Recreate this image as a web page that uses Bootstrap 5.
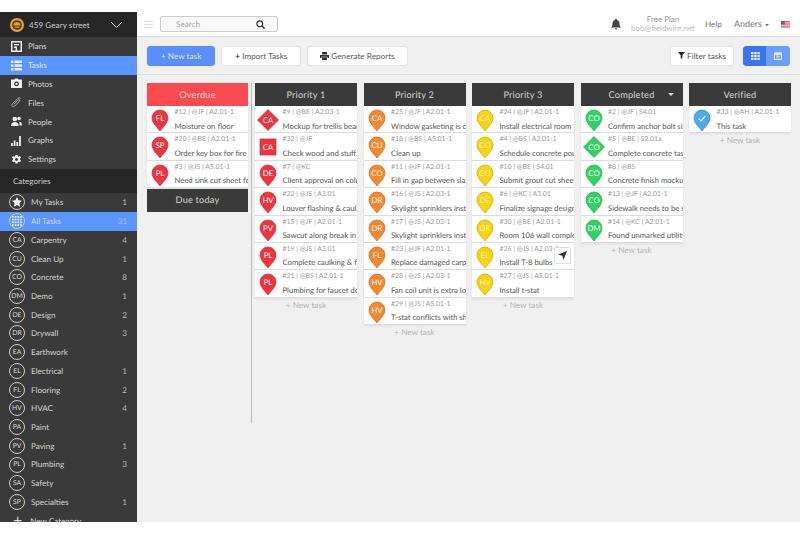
<!DOCTYPE html>
<html>
<head>
    <meta charset="UTF-8">
    <meta name="viewport" content="width=device-width, initial-scale=1">
    <title>Tasks</title>
    <link href="https://cdn.jsdelivr.net/npm/bootstrap@5.3.3/dist/css/bootstrap.min.css" rel="stylesheet">
    <style>
        html, body { height: 533px; overflow: hidden; background: #fff; }
        body { font-family: Lato, "Liberation Sans", sans-serif; font-size: 9px; color: #444; padding: 12px 0 11px; text-rendering: geometricPrecision; }
        .app-frame { height: 510px; overflow: hidden; }
        .side-panel { width: 137px; flex: none; background: #3a3a3a; color: #ddd; overflow: hidden; }
        .side-head { height: 25px; background: #262626; padding: 0 10px; }
        .site-name { font-size: 8px; color: #ccc; margin-left: 5px; letter-spacing: .1px; }
        .side-nav-row { height: 18.8px; padding-left: 11px; color: #d4d4d4; font-size: 8px; }
        .side-nav-row svg { width: 11px; height: 11px; margin-right: 6px; flex: none; fill: #eee; }
        .side-active { background: #5b96ff; color: #d9e6ff; }
        .cats-head { height: 24.5px; background: #262626; padding-left: 13px; font-size: 8px; color: #ccc; }
        .cat-row { height: 18.72px; padding: 0 10px 0 9px; font-size: 8.1px; color: #d4d4d4; }
        .cat-ring { width: 16px; height: 16px; border: 1px solid #ccc; border-radius: 50%; font-size: 6.8px; color: #ddd; margin-right: 6px; flex: none; }
        .cat-count { margin-left: auto; color: #bbb; }
        .main-pane { background: #f0f0f0; min-width: 0; }
        .top-strip { height: 25px; background: #fff; border-bottom: 1px solid #ddd; padding: 0 10px 0 7px; }
        .ham-icon { width: 9px; height: 7px; border-top: 1px solid #ddd; border-bottom: 1px solid #ddd; position: relative; margin-right: 7px; }
        .ham-icon::after { content: ""; position: absolute; left: 0; right: 0; top: 2px; border-top: 1px solid #ddd; }
        .search-box { width: 118px; height: 16px; border: 1px solid #ccc; border-radius: 2px; background: #f8f8f8; padding: 0 12px 0 15px; color: #aaa; font-size: 8.2px; }
        .bell-icon { margin-right: 10px; }
        .plan-info { line-height: 9.5px; font-size: 8px; text-align: center; color: #999; margin-right: 10px; }
        .plan-info span { color: #bbb; }
        .top-link { font-size: 8.2px; color: #777; }
        .help-link { margin-right: 12px; }
        .user-link { font-size: 9px; }
        .user-caret { border: 2.500px solid transparent; border-top-color: #666; border-bottom: 0; margin: 1px 12px 0 3px; }
        .tool-strip { height: 38px; padding: 0 10px; border-bottom: 1px solid #ddd; gap: 6px; }
        .tool-strip .btn { height: 20px; padding: 0 13px; font-size: 8.2px; line-height: 18px; border-radius: 3px; white-space: nowrap; }
        .btn-pale { background: #fff; border: 1px solid #e4e4e4; color: #555; }
        .btn-blue { background: #5b8fff; border: 1px solid #5b8fff; color: #d8e5ff; }
        .tool-strip .btn-report { padding: 0 12px; gap: 2px; }
        .tool-strip .btn-filter { padding: 0 7px; gap: 2px; }
        .view-pick { margin-left: 3px; }
        .tool-strip .view-pick .btn { width: 24px; padding: 0; display: flex; align-items: center; justify-content: center; }
        .view-on { background: #3b74f2; border: 1px solid #3b74f2; }
        .view-off { background: #6c9dfb; border: 1px solid #6c9dfb; }
        .board-area { padding: 8px 0 0 10px; }
        .task-col { width: 102px; flex: none; margin-right: 6.5px; }
        .first-col { width: 101px; margin-right: 3px; }
        .col-rule { width: 1px; height: 340px; background: #bbb; margin-right: 3px; flex: none; }
        .col-title { height: 23px; background: #3a3a3a; color: #d4d4d4; font-size: 9.2px; letter-spacing: .2px; position: relative; }
        .col-title.overdue { background: #fa4b50; color: #ffd5d5; }
        .col-caret { position: absolute; right: 9px; top: 10px; border: 3px solid transparent; border-top-color: #ddd; border-bottom: 0; }
        .task-item { height: 27.4px; background: #fff; border-bottom: 1px solid #ddd; padding-left: 27.5px; position: relative; overflow: hidden; white-space: nowrap; box-shadow: 0 1px 2px rgba(0,0,0,.08); }
        .task-pin { position: absolute; left: 4px; top: 3px; width: 18px; height: 23px; }
        .task-meta { font-size: 6.9px; color: #999; line-height: 9px; padding-top: 2px; }
        .task-name { font-size: 7.7px; color: #555; line-height: 10px; margin-top: 3.500px; }
        .add-task { text-align: center; font-size: 8.2px; color: #b5b5b5; padding-top: 1px; }
        .due-title { margin-top: .5px; }
        .send-tip { position: absolute; right: 3px; top: 4px; width: 17px; height: 17px; background: #fff; border: 1px solid #ddd; border-radius: 2px; }
    </style>
</head>
<body>
    <div class="app-frame d-flex">
        <div class="side-panel">
            <div class="side-head d-flex align-items-center">
                <svg width="14" height="14" viewBox="0 0 14 14"><circle cx="7" cy="7" r="7" fill="#e8a33a"/><circle cx="7" cy="7" r="4.800" fill="#4a3a20"/><path d="M3.500 7.500a3.500 3.500 0 0 1 7 0z" fill="#e8a33a"/><rect x="4.500" y="8.500" width="5" height="1.200" fill="#e8a33a"/></svg>
                <span class="site-name">459 Geary street</span>
                <svg class="ms-auto me-1" width="13" height="8" viewBox="0 0 13 8"><path d="M1 1l5.500 5.500L12 1" fill="none" stroke="#ddd" stroke-width="1"/></svg>
            </div>
            <div id="sideNav"></div>
            <div class="cats-head d-flex align-items-center">Categories</div>
            <div id="catList"></div>
        </div>
        <div class="main-pane flex-grow-1 d-flex flex-column">
            <div class="top-strip d-flex align-items-center">
                <div class="ham-icon"></div>
                <div class="search-box d-flex align-items-center justify-content-between">
                    <span>Search</span>
                    <svg width="9" height="9" viewBox="0 0 10 10"><circle cx="4.200" cy="4.200" r="3.200" fill="none" stroke="#333" stroke-width="1.300"/><path d="M6.500 6.500L9.500 9.500" stroke="#333" stroke-width="1.500"/></svg>
                </div>
                <div class="ms-auto d-flex align-items-center">
                    <svg class="bell-icon" width="10" height="11" viewBox="0 0 10 11"><path d="M5 0c.6 0 1 .4 1 1 2 .5 2.500 2 2.500 3.500 0 2 .5 3 1.500 4H0c1-1 1.500-2 1.500-4C1.500 3 2 1.500 4 1c0-.6.4-1 1-1zM3.800 9.300h2.400A1.200 1.200 0 0 1 3.800 9.300z" fill="#444"/></svg>
                    <div class="plan-info">Free Plan<br><span>bob@fieldwire.net</span></div>
                    <span class="top-link help-link">Help</span>
                    <span class="top-link user-link">Anders</span>
                    <span class="user-caret d-inline-block"></span>
                    <svg width="9" height="7" viewBox="0 0 9 7"><rect width="9" height="7" fill="#e8626a"/><rect y="1.400" width="9" height="1" fill="#f3dcdc"/><rect y="3.600" width="9" height="1" fill="#f3dcdc"/><rect y="5.600" width="9" height=".8" fill="#f3dcdc"/><rect width="4" height="3.400" fill="#5866a8"/></svg>
                </div>
            </div>
            <div class="tool-strip d-flex align-items-center">
                <button class="btn btn-blue"><b class="fw-bold">+</b> New task</button>
                <button class="btn btn-pale"><b class="text-dark">+</b> Import Tasks</button>
                <button class="btn btn-pale btn-report d-flex align-items-center">
                    <svg width="9" height="8" viewBox="0 0 9 8"><path d="M2 0h5v2.500H2zM0 3h9v3H7.500V4.800h-6V6H0zM2 5.300h5V8H2z" fill="#333"/></svg>
                    Generate Reports
                </button>
                <button class="btn btn-pale btn-filter ms-auto d-flex align-items-center">
                    <svg width="7" height="7" viewBox="0 0 7 7"><path d="M0 0h7L4.300 3.300V7L2.700 6V3.300z" fill="#222"/></svg>
                    Filter tasks
                </button>
                <div class="btn-group view-pick">
                    <button class="btn view-on"><svg width="9" height="8" viewBox="0 0 9 8" fill="#dfe9ff"><rect width="2.500" height="2.200"/><rect x="3.200" width="2.500" height="2.200"/><rect x="6.400" width="2.500" height="2.200"/><rect y="2.900" width="2.500" height="2.200"/><rect x="3.200" y="2.900" width="2.500" height="2.200"/><rect x="6.400" y="2.900" width="2.500" height="2.200"/><rect y="5.800" width="2.500" height="2.200"/><rect x="3.200" y="5.800" width="2.500" height="2.200"/><rect x="6.400" y="5.800" width="2.500" height="2.200"/></svg></button>
                    <button class="btn view-off"><svg width="8" height="8" viewBox="0 0 8 8"><rect x=".5" y="1" width="7" height="6.500" fill="none" stroke="#dfe9ff"/><path d="M.5 1h7v2h-7zM2 0v1M6 0v1" fill="#dfe9ff" stroke="#dfe9ff" stroke-width=".6"/><path d="M2 4.500h4M2 6h4" stroke="#dfe9ff" stroke-width=".7"/></svg></button>
                </div>
            </div>
            <div class="board-area d-flex flex-grow-1" id="board"></div>
        </div>
    </div>

    <script src="https://cdn.jsdelivr.net/npm/bootstrap@5.3.3/dist/js/bootstrap.bundle.min.js"></script>
    <script>
        const navItems = [
            ['Plans', '<path d="M0 0h11v11H0zM1.500 1.500v8h3V7h-1.500V5.500h3V9.500h3.500v-8z" fill-rule="evenodd"/><rect x="3" y="3" width="5" height="1.300"/>'],
            ['Tasks', '<rect width="2.500" height="2.500" y=".5"/><rect x="3.500" y=".5" width="7.500" height="2.500"/><rect width="2.500" height="2.500" y="4.300"/><rect x="3.500" y="4.300" width="7.500" height="2.500"/><rect width="2.500" height="2.500" y="8"/><rect x="3.500" y="8" width="7.500" height="2.500"/>'],
            ['Photos', '<path d="M3.500 1.500L4.300.5h2.400l.8 1H11v8.500H0V1.500zM5.500 3.500a2.400 2.400 0 1 0 .01 0zM5.500 4.800a1.100 1.100 0 1 1-.01 0z" fill-rule="evenodd"/>'],
            ['Files', '<path d="M9.500 1.500c-1-1-2-.8-3 .2L1.500 6.800c-1 1-.8 1.800-.2 2.400s1.500.7 2.400-.2L8.500 4.200c.5-.6.500-1 .1-1.400s-.9-.3-1.400.2L3 7.200" fill="none" stroke="#bbb" stroke-width=".9"/>'],
            ['People', '<circle cx="3.800" cy="3" r="2.300"/><path d="M0 10c0-3 1.500-4 3.800-4s3.800 1 3.800 4z"/><circle cx="8" cy="2.500" r="1.800"/><path d="M8.500 9.500H11c0-2.800-1-3.700-3-3.700 1 1 .5 2.700.5 3.700z"/>'],
            ['Graphs', '<rect y="8" width="1.800" height="3"/><rect x="2.700" y="5.500" width="1.800" height="5.500"/><rect x="5.400" y="7" width="1.800" height="4"/><rect x="8.100" y="1" width="1.800" height="10"/>'],
            ['Settings', '<path d="M4.500 1h2l.3 1.200 1 .5 1.200-.6 1 1.700-1 .8v1.200l1 .8-1 1.700-1.200-.6-1 .5-.3 1.200h-2l-.3-1.200-1-.5-1.200.6-1-1.700 1-.8V4.600l-1-.8 1-1.700 1.200.6 1-.5zM5.500 4a1.500 1.500 0 1 0 .01 0z" fill-rule="evenodd"/>']
        ];
        const cats = [
            ['My Tasks', '1', 'star'], ['All Tasks', '31', 'grid'], ['Carpentry', '4', 'CA'], ['Clean Up', '1', 'CU'],
            ['Concrete', '8', 'CO'], ['Demo', '1', 'DM'], ['Design', '2', 'DE'], ['Drywall', '3', 'DR'],
            ['Earthwork', '', 'EA'], ['Electrical', '1', 'EL'], ['Flooring', '2', 'FL'], ['HVAC', '4', 'HV'],
            ['Paint', '', 'PA'], ['Paving', '1', 'PV'], ['Plumbing', '3', 'PL'], ['Safety', '', 'SA'], ['Specialties', '1', 'SP']
        ];
        const RED = ['#ee3440', '#c9303a'], ORANGE = ['#f6872c', '#c96f20'], YELLOW = ['#f7d412', '#c4a814'], GREEN = ['#2fd263', '#28a850'], BLUE = ['#4da9f2', '#3b85c4'];
        const columns = [
            { title: 'Overdue', color: RED, first: 1, tasks: [
                ['FL', '#12 | @JF | A2.01-1', 'Moisture on floor'],
                ['SP', '#20 | @BE | A2.01-1', 'Order key box for fire dept'],
                ['PL', '#3 | @JS | A5.01-1', 'Need sink cut sheet for approval']] },
            { title: 'Priority 1', color: RED, add: 1, tasks: [
                ['CA', '#9 | @BE | A2.03-1', 'Mockup for trellis beam', 'diamond'],
                ['CA', '#32 | @JF', 'Check wood and stuff.', 'square'],
                ['DE', '#7 | @KC', 'Client approval on color'],
                ['HV', '#22 | @JS | A3.01', 'Louver flashing & caulking'],
                ['PV', '#15 | @JF | A2.01-1', 'Sawcut along break in slab'],
                ['PL', '#19 | @JS | A3.01', 'Complete caulking & flashing'],
                ['PL', '#21 | @BS | A2.01-1', 'Plumbing for faucet does not']] },
            { title: 'Priority 2', color: ORANGE, add: 1, tasks: [
                ['CA', '#25 | @JF | A2.01-1', 'Window gasketing is cut'],
                ['CU', '#18 | @BS | A5.01-1', 'Clean up'],
                ['CO', '#11 | @JF | A2.01-1', 'Fill in gap between slab'],
                ['DR', '#16 | @JS | A2.03-1', 'Skylight sprinklers install'],
                ['DR', '#17 | @JS | A2.03-1', 'Skylight sprinklers install'],
                ['FL', '#23 | @JF | A2.01-1', 'Replace damaged carpet'],
                ['HV', '#28 | @JS | A2.03-1', 'Fan coil unit is extra long'],
                ['HV', '#29 | @JS | A5.01-1', 'T-stat conflicts with shelf']] },
            { title: 'Priority 3', color: YELLOW, add: 1, tasks: [
                ['CA', '#24 | @JF | A2.01-1', 'Install electrical room fan'],
                ['CO', '#4 | @BS | A2.01-1', 'Schedule concrete pour'],
                ['CO', '#10 | @BE | S4.01', 'Submit grout cut sheet'],
                ['DE', '#6 | @KC | A3.01', 'Finalize signage design'],
                ['DR', '#30 | @BE | A2.01-1', 'Room 106 wall complete'],
                ['EL', '#26 | @JS | A2.03-1', 'Install T-8 bulbs', 'pin', 1],
                ['HV', '#27 | @JS | A5.01-1', 'Install t-stat']] },
            { title: 'Completed', color: GREEN, add: 1, caret: 1, tasks: [
                ['CO', '#2 | @JF | S4.01', 'Confirm anchor bolt size'],
                ['CO', '#5 | @BE | S2.01a', 'Complete concrete task', 'diamond'],
                ['CO', '#8 | @BS', 'Concrete finish mockup'],
                ['CO', '#13 | @JF | A2.01-1', 'Sidewalk needs to be swept'],
                ['DM', '#14 | @KC | A2.01-1', 'Found unmarked utility']] },
            { title: 'Verified', color: BLUE, add: 1, tasks: [
                ['check', '#33 | @AH | A2.01-1', 'This task']] }
        ];

        function pinSvg(label, color, shape) {
            const fill = color[0], line = color[1];
            let body = `<path d="M9 22C6 18 1 14 1 9a8 8 0 0 1 16 0c0 5-5 9-8 13z" fill="${fill}" stroke="${line}" stroke-width=".7"/>`;
            let y = 11.500;
            if (shape === 'diamond') { body = `<path d="M9 .5L19.500 11 9 21.500-1.500 11z" fill="${fill}" stroke="${line}" stroke-width=".7"/>`; y = 13.500; }
            if (shape === 'square') { body = `<rect x="1" y="3" width="16" height="16" fill="${fill}" stroke="${line}" stroke-width=".7"/>`; y = 13.500; }
            const text = label === 'check'
                ? '<path d="M5.500 9.500l2.500 2.500 4.500-5" fill="none" stroke="#e4f2ff" stroke-width="1.200"/>'
                : `<text x="9" y="${y}" text-anchor="middle" font-size="7.800" fill="${color === YELLOW ? '#fff3a8' : '#fff'}" font-family="Lato, sans-serif">${label}</text>`;
            return `<svg class="task-pin" viewBox="0 0 18 23" overflow="visible">${body}${text}</svg>`;
        }

        function catIcon(code) {
            if (code === 'star') return '<svg width="10" height="10" viewBox="0 0 10 10"><path d="M5 0l1.500 3.300 3.500.4-2.600 2.400.7 3.600L5 7.900 1.900 9.700l.7-3.600L0 3.700l3.500-.4z" fill="#fff"/></svg>';
            if (code === 'grid') {
                let dots = '';
                for (let r = 0; r < 4; r++) for (let c = 0; c < 4; c++) dots += `<rect x="${c * 2.500}" y="${r * 2.500}" width="1.600" height="1.600"/>`;
                return `<svg width="10" height="10" viewBox="0 0 9.200 9.200" fill="#e6efff">${dots}</svg>`;
            }
            return code;
        }

        document.getElementById('sideNav').innerHTML = navItems.map(([name, icon]) =>
            `<div class="side-nav-row d-flex align-items-center ${name === 'Tasks' ? 'side-active' : ''}"><svg viewBox="0 0 11 11">${icon}</svg>${name}</div>`
        ).join('');

        document.getElementById('catList').innerHTML = cats.map(([name, count, code]) =>
            `<div class="cat-row d-flex align-items-center ${name === 'All Tasks' ? 'side-active' : ''}"><div class="cat-ring d-flex align-items-center justify-content-center">${catIcon(code)}</div>${name}<span class="cat-count">${count}</span></div>`
        ).join('') + '<div class="cat-row d-flex align-items-center"><span class="ms-1 me-2 fs-6 lh-1">+</span>New Category</div>';

        const board = document.getElementById('board');
        columns.forEach(col => {
            let html = `<div class="col-title d-flex align-items-center justify-content-center ${col.first ? 'overdue' : ''}">${col.title}${col.caret ? '<span class="col-caret"></span>' : ''}</div>`;
            col.tasks.forEach(t => {
                const tip = t[4] ? '<div class="send-tip d-flex align-items-center justify-content-center"><svg width="9" height="9" viewBox="0 0 9 9"><path d="M9 0L5.500 9 4.300 4.700 0 3.500z" fill="#333"/></svg></div>' : '';
                html += `<div class="task-item">${pinSvg(t[0], col.color, t[3])}<div class="task-meta">${t[1]}</div><div class="task-name">${t[2].replace('&', '&amp;')}</div>${tip}</div>`;
            });
            if (col.first) html += '<div class="col-title d-flex align-items-center justify-content-center due-title">Due today</div>';
            if (col.add) html += '<div class="add-task">+ New task</div>';
            const div = document.createElement('div');
            div.className = 'task-col' + (col.first ? ' first-col' : '');
            div.innerHTML = html;
            board.appendChild(div);
            if (col.first) {
                const rule = document.createElement('div');
                rule.className = 'col-rule';
                board.appendChild(rule);
            }
        });
    </script>
</body>
</html>
